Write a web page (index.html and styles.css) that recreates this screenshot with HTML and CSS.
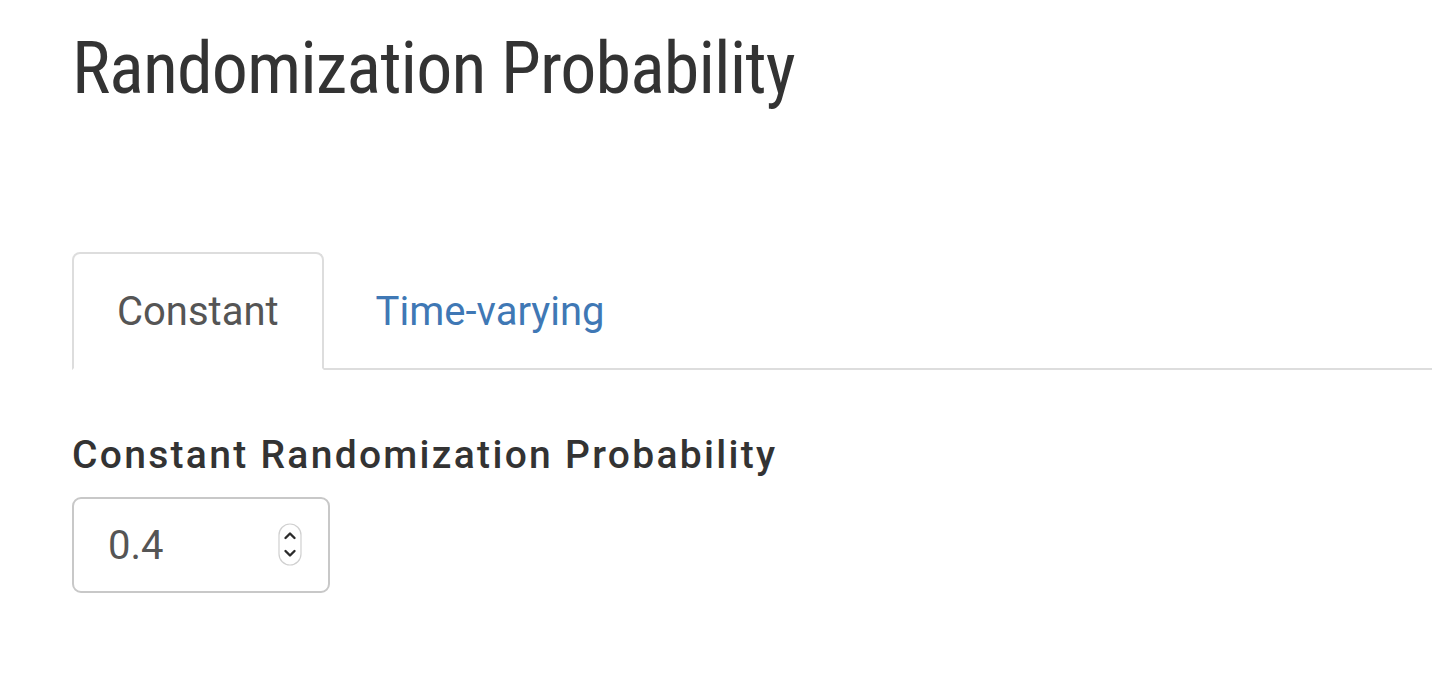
FILE: index.html
```html
<!DOCTYPE html>
<html>
<head>
<meta charset="utf-8">
<link rel="stylesheet" href="styles.css">
</head>
<body>
<div class="page">
  <h1 class="title"><span class="title-text">Randomization Probability</span></h1>
  <ul class="tabs">
    <li class="tab active">Constant</li>
    <li class="tab link">Time-varying</li>
  </ul>
  <div class="field">
    <label class="label">Constant Randomization Probability</label>
    <div class="number-input">
      <span class="value">0.4</span>
      <svg class="spinner" width="24" height="43" viewBox="0 0 24 43">
        <rect x="1" y="1" width="22" height="41" rx="11" ry="11" fill="#fff" stroke="#d0d0d0" stroke-width="1.2"/>
        <path d="M7.5 15 L12 10.5 L16.5 15" fill="none" stroke="#2b2b2b" stroke-width="2.4" stroke-linecap="round" stroke-linejoin="round"/>
        <path d="M7.5 28 L12 32.5 L16.5 28" fill="none" stroke="#2b2b2b" stroke-width="2.4" stroke-linecap="round" stroke-linejoin="round"/>
      </svg>
    </div>
  </div>
</div>
</body>
</html>
```

FILE: styles.css
```css
html, body {
  margin: 0;
  padding: 0;
  background: #fff;
}
body {
  font-family: Roboto, "Liberation Sans", sans-serif;
  color: #333;
}
.page {
  padding-left: 72px;
}
.title {
  margin: 29px 0 0 0;
  font-size: 72px;
  font-weight: 400;
  line-height: 79px;
  color: #333;
  white-space: nowrap;
}
.title-text {
  display: inline-block;
  font-stretch: 75%;
  letter-spacing: -0.9px;
}
.tabs {
  list-style: none;
  margin: 144px 0 0 0;
  padding: 0;
  display: flex;
  border-bottom: 2px solid #ddd;
}
.tab {
  font-size: 40px;
  line-height: 56px;
  padding: 30px 43px 28px 43px;
  border: 2px solid transparent;
  border-radius: 8px 8px 0 0;
  margin-bottom: -2px;
  margin-right: 7px;
}
.tab.active {
  color: #555;
  border-color: #ddd;
  border-bottom-color: #fff;
  background: #fff;
}
.tab.link {
  color: #3f78b5;
}
.field {
  margin-top: 60px;
}
.label {
  display: block;
  font-size: 39px;
  font-weight: 500;
  letter-spacing: 2.3px;
  line-height: 50px;
  color: #333;
}
.number-input {
  margin-top: 17px;
  width: 258px;
  height: 96px;
  box-sizing: border-box;
  border: 2px solid #c8c8c8;
  border-radius: 9px;
  display: flex;
  align-items: center;
  padding: 0 26px 0 34px;
}
.value {
  flex: 1;
  font-size: 40px;
  color: #555;
  line-height: 1;
  padding-top: 2px;
}
.spinner {
  display: block;
  margin-top: -2px;
}
```
